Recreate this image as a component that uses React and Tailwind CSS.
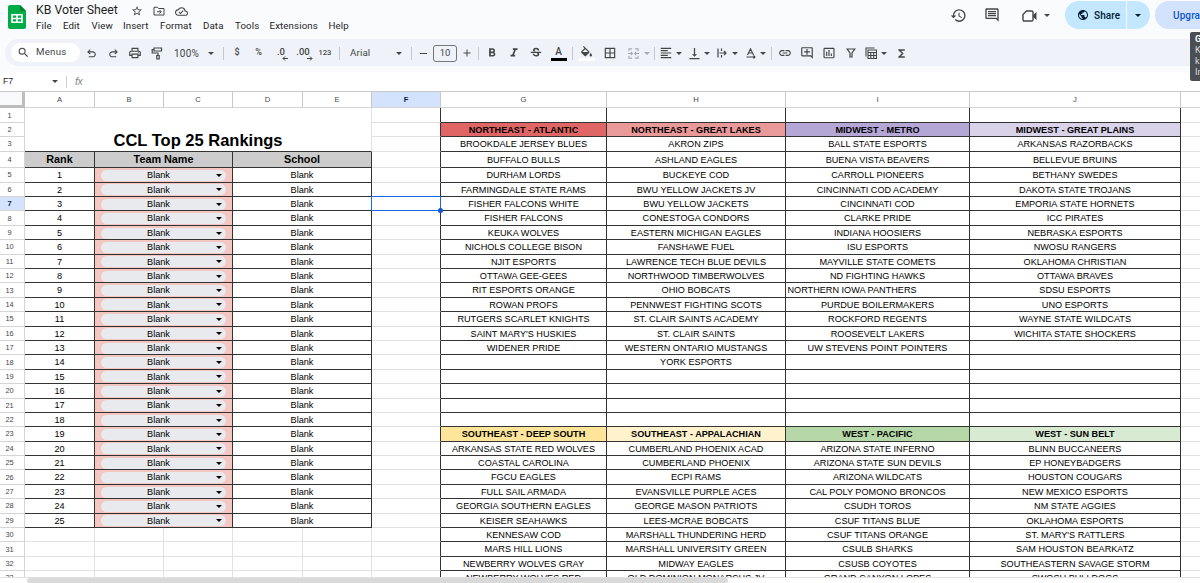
import React from "react";
import {
    MdBorderAll,
    MdFormatAlignLeft,
    MdFormatBold,
    MdFormatItalic,
    MdFunctions,
    MdHistory,
    MdInsertChartOutlined,
    MdLink,
    MdOutlineAddComment,
    MdOutlineCloudDone,
    MdOutlineComment,
    MdOutlinePrint,
    MdPublic,
    MdSearch,
    MdStarBorder,
    MdStrikethroughS,
    MdVerticalAlignBottom,
} from "react-icons/md";

const menus = [
    { label: "File", w: "w-[27px]" },
    { label: "Edit", w: "w-[28.5px]" },
    { label: "View", w: "w-[31.5px]" },
    { label: "Insert", w: "w-[37px]" },
    { label: "Format", w: "w-[43px]" },
    { label: "Data", w: "w-[32px]" },
    { label: "Tools", w: "w-[34.5px]" },
    { label: "Extensions", w: "w-[59px]" },
    { label: "Help", w: "w-[24px]" },
];

const columns = [
    { name: "A", w: "w-[70px]" },
    { name: "B", w: "w-[69px]" },
    { name: "C", w: "w-[69px]" },
    { name: "D", w: "w-[70px]" },
    { name: "E", w: "w-[69px]" },
    { name: "F", w: "w-[69px]" },
    { name: "G", w: "w-[166px]" },
    { name: "H", w: "w-[179px]" },
    { name: "I", w: "w-[184px]" },
    { name: "J", w: "w-[211px]" },
    { name: "", w: "w-[20px]" },
];

const rows = Array.from({ length: 33 }, (_, i) => i + 1);
const ranks = Array.from({ length: 25 }, (_, i) => i + 1);

// The first rows are not all the same height
const rowHeight = (n) => {
    if (n === 1) return "h-[14.6px]";
    if (n === 2) return "h-[14.2px]";
    if (n === 3) return "h-[14.8px]";
    if (n === 4) return "h-[16.4px]";
    return "h-[14.4px]";
};

const conferences = [
    {
        w: "w-[166px]",
        top: { name: "NORTHEAST - ATLANTIC", bg: "bg-[#e06666]" },
        topTeams: [
            "BROOKDALE JERSEY BLUES", "BUFFALO BULLS", "DURHAM LORDS", "FARMINGDALE STATE RAMS",
            "FISHER FALCONS WHITE", "FISHER FALCONS", "KEUKA WOLVES", "NICHOLS COLLEGE BISON",
            "NJIT ESPORTS", "OTTAWA GEE-GEES", "RIT ESPORTS ORANGE", "ROWAN PROFS",
            "RUTGERS SCARLET KNIGHTS", "SAINT MARY'S HUSKIES", "WIDENER PRIDE",
        ],
        bottom: { name: "SOUTHEAST - DEEP SOUTH", bg: "bg-[#ffe599]" },
        bottomTeams: [
            "ARKANSAS STATE RED WOLVES", "COASTAL CAROLINA", "FGCU EAGLES", "FULL SAIL ARMADA",
            "GEORGIA SOUTHERN EAGLES", "KEISER SEAHAWKS", "KENNESAW COD", "MARS HILL LIONS",
            "NEWBERRY WOLVES GRAY", "NEWBERRY WOLVES RED",
        ],
    },
    {
        w: "w-[179px]",
        top: { name: "NORTHEAST - GREAT LAKES", bg: "bg-[#ea9999]" },
        topTeams: [
            "AKRON ZIPS", "ASHLAND EAGLES", "BUCKEYE COD", "BWU YELLOW JACKETS JV",
            "BWU YELLOW JACKETS", "CONESTOGA CONDORS", "EASTERN MICHIGAN EAGLES", "FANSHAWE FUEL",
            "LAWRENCE TECH BLUE DEVILS", "NORTHWOOD TIMBERWOLVES", "OHIO BOBCATS", "PENNWEST FIGHTING SCOTS",
            "ST. CLAIR SAINTS ACADEMY", "ST. CLAIR SAINTS", "WESTERN ONTARIO MUSTANGS", "YORK ESPORTS",
        ],
        bottom: { name: "SOUTHEAST - APPALACHIAN", bg: "bg-[#fff2cc]" },
        bottomTeams: [
            "CUMBERLAND PHOENIX ACAD", "CUMBERLAND PHOENIX", "ECPI RAMS", "EVANSVILLE PURPLE ACES",
            "GEORGE MASON PATRIOTS", "LEES-MCRAE BOBCATS", "MARSHALL THUNDERING HERD", "MARSHALL UNIVERSITY GREEN",
            "MIDWAY EAGLES", "OLD DOMINION MONARCHS JV",
        ],
    },
    {
        w: "w-[184px]",
        top: { name: "MIDWEST - METRO", bg: "bg-[#b4a7d6]" },
        topTeams: [
            "BALL STATE ESPORTS", "BUENA VISTA BEAVERS", "CARROLL PIONEERS", "CINCINNATI COD ACADEMY",
            "CINCINNATI COD", "CLARKE PRIDE", "INDIANA HOOSIERS", "ISU ESPORTS",
            "MAYVILLE STATE COMETS", "ND FIGHTING HAWKS", "NORTHERN IOWA PANTHERS", "PURDUE BOILERMAKERS",
            "ROCKFORD REGENTS", "ROOSEVELT LAKERS", "UW STEVENS POINT POINTERS",
        ],
        bottom: { name: "WEST - PACIFIC", bg: "bg-[#b6d7a8]" },
        bottomTeams: [
            "ARIZONA STATE INFERNO", "ARIZONA STATE SUN DEVILS", "ARIZONA WILDCATS", "CAL POLY POMONO BRONCOS",
            "CSUDH TOROS", "CSUF TITANS BLUE", "CSUF TITANS ORANGE", "CSULB SHARKS",
            "CSUSB COYOTES", "GRAND CANYON LOPES",
        ],
    },
    {
        w: "w-[211px]",
        top: { name: "MIDWEST - GREAT PLAINS", bg: "bg-[#d9d2e9]" },
        topTeams: [
            "ARKANSAS RAZORBACKS", "BELLEVUE BRUINS", "BETHANY SWEDES", "DAKOTA STATE TROJANS",
            "EMPORIA STATE HORNETS", "ICC PIRATES", "NEBRASKA ESPORTS", "NWOSU RANGERS",
            "OKLAHOMA CHRISTIAN", "OTTAWA BRAVES", "SDSU ESPORTS", "UNO ESPORTS",
            "WAYNE STATE WILDCATS", "WICHITA STATE SHOCKERS",
        ],
        bottom: { name: "WEST - SUN BELT", bg: "bg-[#d9ead3]" },
        bottomTeams: [
            "BLINN BUCCANEERS", "EP HONEYBADGERS", "HOUSTON COUGARS", "NEW MEXICO ESPORTS",
            "NM STATE AGGIES", "OKLAHOMA ESPORTS", "ST. MARY'S RATTLERS", "SAM HOUSTON BEARKATZ",
            "SOUTHEASTERN SAVAGE STORM", "SWOSU BULLDOGS",
        ],
    },
];

const Caret = ({ className = "" }) => (
    <svg viewBox="0 0 6 3" className={`w-[6px] h-[3px] shrink-0 fill-current ${className}`}>
        <path d="M0 0h6L3 3z" />
    </svg>
);

const Slot = ({ className = "", w = "w-4", children }) => (
    <div className={`flex shrink-0 items-center justify-center ${w} ${className}`}>{children}</div>
);

const Sep = () => <div className="w-px h-[13px] bg-[#c7c7c7]" />;

const Arrow = ({ flip }) => (
    <svg viewBox="0 0 24 24" className={`mt-px size-[13px] fill-current ${flip ? "-scale-x-100" : ""}`}>
        <path d="M7 19v-2h7.1q1.575 0 2.738-1T18 13.5q0-1.5-1.162-2.5T14.1 10H7.8l2.6 2.6L9 14 4 9l5-5 1.4 1.4L7.8 8h6.3q2.425 0 4.163 1.575T20 13.5q0 2.35-1.737 3.925T14.1 19H7Z" />
    </svg>
);

const Decimal = ({ text, right }) => (
    <div className="relative flex h-[13px] items-start text-[9.5px] leading-[9px] font-medium">
        {text}
        <svg
            viewBox="0 0 6 5"
            className={`absolute -right-[3px] -bottom-px h-[5px] w-[6px] fill-none stroke-current ${right ? "-scale-x-100" : ""}`}
        >
            <path d="M6 2.5H1M3 .5l-2 2 2 2" />
        </svg>
    </div>
);

const SheetsLogo = () => (
    <svg viewBox="0 0 18 24" className="w-[18px] h-6">
        <path fill="#00ac47" d="M2 0h10l6 6v16a2 2 0 0 1-2 2H2a2 2 0 0 1-2-2V2a2 2 0 0 1 2-2z" />
        <path fill="#00832d" d="M12 0l6 6h-6z" />
        <path fill="#fff" fillRule="evenodd" d="M3.2 9h11.6v9H3.2zM5 10.6v2.1h3.2v-2.1zm4.8 0v2.1H13v-2.1zM5 14.3v2.1h3.2v-2.1zm4.8 0v2.1H13v-2.1z" />
    </svg>
);

const Header = () => (
    <div className="flex h-[39px] shrink-0 text-[#1f1f1f]">
        <div className="w-9 shrink-0 pl-2 pt-[5px]">
            <SheetsLogo />
        </div>
        <div className="w-[900px] shrink-0">
            <div className="flex h-[21px] items-center text-[#444746]">
                <span className="w-[95px] whitespace-nowrap text-[12.3px] text-[#1f1f1f]">KB Voter Sheet</span>
                <MdStarBorder className="mt-px size-3" />
                <svg viewBox="0 0 24 24" className="ml-[10px] mt-px size-3 fill-none stroke-current stroke-2">
                    <path d="M2 4.5h7l2 2.5h11v13H2zM8 13.5h8M13 10l3.5 3.5L13 17" />
                </svg>
                <MdOutlineCloudDone className="ml-[10px] mt-px size-[13px]" />
            </div>
            <div className="flex h-[11px] items-center text-[9.7px] tracking-[0.12px]">
                {menus.map((m) => (
                    <span key={m.label} className={`whitespace-nowrap ${m.w}`}>{m.label}</span>
                ))}
            </div>
        </div>
        <div className="flex h-[30px] shrink-0 items-center text-[#444746]">
            <Slot w="w-[17px]" className="ml-[13.5px]"><MdHistory className="size-[17px]" /></Slot>
            <Slot className="ml-[17.5px]"><MdOutlineComment className="size-4" /></Slot>
            <Slot className="ml-[22px]">
                <svg viewBox="0 0 16 12" className="mt-px h-3 w-4 fill-none stroke-current stroke-[1.4]">
                    <path d="M4.500 1h5.200q1.300 0 1.300 1.300v7.400Q11 11 9.700 11H2.300Q1 11 1 9.700V4.500z" />
                    <path className="fill-current stroke-none" d="M11 5l3.500-3v8L11 7z" />
                </svg>
            </Slot>
            <Slot w="w-[9px]" className="ml-[4px]"><Caret /></Slot>
            <div className="ml-[14px] flex h-7 w-[85px] items-center overflow-hidden rounded-full bg-[#c2e7ff] text-[#001d35]">
                <MdPublic className="ml-3 size-3" />
                <span className="ml-[5px] w-[32px] text-[10px] font-medium tracking-[0.1px]">Share</span>
                <div className="h-full w-px bg-[#f9fbfd]" />
                <Caret className="ml-[8px]" />
            </div>
            <div className="ml-[5px] flex h-7 w-[90px] items-center rounded-full bg-[#d3e3fd] pl-[18px] text-[10px] font-medium tracking-[0.1px] text-[#0b57d0]">
                Upgrade
            </div>
        </div>
    </div>
);

const Toolbar = () => (
    <div className="ml-[5px] flex h-[27px] w-[1230px] shrink-0 items-center rounded-full bg-[#eff3f9] pt-px pl-[6px] text-[#444746]">
        <div className="mb-px flex h-[19px] w-[69px] shrink-0 items-center rounded-full bg-white pl-[6px] text-[9.7px] tracking-[0.25px]">
            <MdSearch className="mr-[6px] size-[13px]" />
            Menus
        </div>
        <Slot w="w-[22px]"><Arrow /></Slot>
        <Slot w="w-[22px]"><Arrow flip /></Slot>
        <Slot w="w-[22px]"><MdOutlinePrint className="size-[14px]" /></Slot>
        <Slot w="w-[22px]">
            <svg viewBox="0 0 12 13" className="h-[13px] w-3 fill-none stroke-current stroke-[1.2]">
                <path d="M3 1h7.500v3H3zM3 2.500H1.200V6H7v2.500M5.800 8.500h2.400V12H5.800z" />
            </svg>
        </Slot>
        <Slot w="w-[37px]" className="text-[10px] tracking-[0.2px]">100%</Slot>
        <Slot w="w-3"><Caret /></Slot>
        <Slot w="w-[13px]"><Sep /></Slot>
        <Slot w="w-[14px]" className="text-[9px] font-medium">$</Slot>
        <Slot w="w-[29px]" className="text-[9px] font-medium">%</Slot>
        <Slot><Decimal text=".0" /></Slot>
        <Slot w="w-7"><Decimal text=".00" right /></Slot>
        <Slot className="text-[7.5px] font-medium">123</Slot>
        <Slot w="w-3"><Sep /></Slot>
        <div className="w-[47px] shrink-0 pl-[5px] text-[9.8px] tracking-[0.1px]">Arial</div>
        <Slot w="w-[13px]"><Caret /></Slot>
        <Slot w="w-[13px]"><Sep /></Slot>
        <Slot w="w-[10px]"><div className="h-px w-[7px] bg-current" /></Slot>
        <Slot w="w-[34px]">
            <div className="flex h-[17px] w-6 items-center justify-center rounded-[3px] border border-[#747775] text-[9.5px]">10</div>
        </Slot>
        <Slot w="w-[10px]">
            <svg viewBox="0 0 8 8" className="size-2 stroke-current"><path d="M4 .5v7M.5 4h7" /></svg>
        </Slot>
        <Slot w="w-[13px]"><Sep /></Slot>
        <Slot w="w-[14px]"><MdFormatBold className="size-[14px]" /></Slot>
        <Slot w="w-[22px]" className="ml-1"><MdFormatItalic className="size-[14px]" /></Slot>
        <Slot w="w-[22px]"><MdStrikethroughS className="size-[14px]" /></Slot>
        <Slot w="w-[23px]">
            <div className="flex h-[15px] w-4 flex-col items-center border-b-[3px] border-black text-[10px] leading-[12px] font-medium">A</div>
        </Slot>
        <Slot w="w-[5px]"><Sep /></Slot>
        <Slot w="w-[23px]">
            <div className="flex h-[15px] w-4 flex-col items-center border-b-[3px] border-white">
                <svg viewBox="0 0 24 18" className="h-[11px] w-[15px] shrink-0 fill-current">
                    <path d="M16.560 8.940L7.620 0 6.210 1.410l2.380 2.380-5.150 5.150a1.490 1.490 0 0 0 0 2.120l5.500 5.500c.29.29.68.44 1.060.44s.77-.15 1.060-.44l5.500-5.500c.59-.58.59-1.530 0-2.120zM5.210 10L10 5.210 14.790 10zM19 11.500s-2 2.170-2 3.500c0 1.100.9 2 2 2s2-.9 2-2c0-1.330-2-3.500-2-3.500z" />
                </svg>
            </div>
        </Slot>
        <Slot w="w-6"><MdBorderAll className="size-[14px]" /></Slot>
        <Slot w="w-[22px]" className="text-[#a8abae]">
            <svg viewBox="0 0 12 12" className="size-[11px] fill-none stroke-current stroke-[1.2]">
                <path d="M4.500 1H1v2.500M7.500 1H11v2.500M4.500 11H1V8.500M7.500 11H11V8.500M0 6h4.500M3 4.200L4.800 6 3 7.800M12 6H7.500M9 4.200L7.200 6 9 7.800" />
            </svg>
        </Slot>
        <Slot w="w-[6px]" className="text-[#a8abae]"><Caret /></Slot>
        <Slot w="w-2"><Sep /></Slot>
        <Slot><MdFormatAlignLeft className="size-[14px]" /></Slot>
        <Slot w="w-2" className="ml-[0.5px]"><Caret /></Slot>
        <Slot className="ml-[3.5px]"><MdVerticalAlignBottom className="size-[15px]" /></Slot>
        <Slot w="w-2" className="ml-[0.5px]"><Caret /></Slot>
        <Slot className="ml-[3.5px]">
            <svg viewBox="0 0 10 10" className="size-[10px] fill-none stroke-current stroke-[1.2]">
                <path d="M1 .5v9M4.500 .5v2.500M4.500 7v2.500M2.500 5h6.500M7 3l2 2-2 2" />
            </svg>
        </Slot>
        <Slot w="w-2" className="ml-px"><Caret /></Slot>
        <Slot className="ml-[3.5px]">
            <svg viewBox="0 0 10 11" className="h-[11px] w-[10px] fill-none stroke-current stroke-[1.1]">
                <path d="M1.500 7L4.500 .8 7.500 7M2.500 5h4M.5 9h8.500M7.500 7.500L9 9 7.500 10.500" />
            </svg>
        </Slot>
        <Slot w="w-2" className="ml-[0.5px]"><Caret /></Slot>
        <Slot w="w-px" className="ml-1"><Sep /></Slot>
        <Slot className="ml-[5px]"><MdLink className="size-[14px]" /></Slot>
        <Slot className="ml-[6px]"><MdOutlineAddComment className="size-[14px]" /></Slot>
        <Slot className="ml-[6px]"><MdInsertChartOutlined className="size-[14px]" /></Slot>
        <Slot className="ml-[5.5px]">
            <svg viewBox="0 0 10 10" className="size-[10px] fill-none stroke-current stroke-[1.2]">
                <path d="M1.200 1h7.600L6 5v4H4V5z" />
            </svg>
        </Slot>
        <Slot className="ml-[4.5px]">
            <svg viewBox="0 0 12 12" className="size-3 fill-none stroke-current stroke-[1.1]">
                <path d="M1 9.500V1h8.500M3 3h8.500v8.500H3zM3 5.500h8.500M3 8.500h8.500M5.800 5.500v6M8.700 5.500v6" />
            </svg>
        </Slot>
        <Slot w="w-2" className="ml-px"><Caret /></Slot>
        <Slot className="ml-[5px]"><MdFunctions className="size-[13px]" /></Slot>
    </div>
);

const FormulaBar = () => (
    <div className="mt-[6px] flex h-[19px] shrink-0 items-center bg-white text-[#444746]">
        <span className="w-[52px] pl-[3px] font-['Liberation_Sans'] text-[8.8px] text-[#1f1f1f]">F7</span>
        <Caret />
        <div className="ml-2 h-3 w-px bg-[#d0d0d0]" />
        <span className="mt-px ml-2 font-['Liberation_Sans'] text-[10.5px] tracking-[-0.3px] italic text-[#80868b]">fx</span>
    </div>
);

const ColumnHeads = () => (
    <div className="flex h-[17.3px] shrink-0 border-t border-[#c9c9c9] text-[7.6px] text-[#444746]">
        <div className="w-[25px] shrink-0 border-r-[3px] border-b-[3px] border-[#bdbdbd] bg-[#f8f9fa]" />
        {columns.map((c) => (
            <div
                key={c.name}
                className={`flex shrink-0 items-center justify-center border-r border-b border-r-[#c9c9c9] border-b-[#d5d5d5] pt-px ${c.w} ${
                    c.name === "F" ? "bg-[#d3e3fd] font-bold text-[#041e49]" : "bg-white"
                }`}
            >
                {c.name}
            </div>
        ))}
    </div>
);

const RowNumbers = () => (
    <div className="w-[25px] shrink-0 text-[7.4px] text-[#444746]">
        {rows.map((n) => (
            <div
                key={n}
                className={`flex items-center justify-center border-r border-b border-[#d5d5d5] pr-[5px] ${rowHeight(n)} ${
                    n === 7 ? "bg-[#d3e3fd] font-bold text-[#041e49]" : ""
                }`}
            >
                {n}
            </div>
        ))}
    </div>
);

const RankRow = ({ rank }) => (
    <div className="flex h-[14.4px]">
        <div className="flex w-[70px] items-center justify-center border-r border-b border-[#333] pt-[1.5px]">{rank}</div>
        <div className="flex w-[138px] items-center justify-center border-r border-b border-[#333] bg-[#f4c7c3] pt-px">
            <div className="flex h-[11px] w-[125px] items-center rounded-full bg-[#e8eaed]">
                <span className="flex-1 pt-[0.5px] text-center">Blank</span>
                <Caret className="mr-[4px] text-black" />
            </div>
        </div>
        <div className="flex w-[139px] items-center justify-center border-r border-b border-[#333] pt-[1.5px]">Blank</div>
    </div>
);

const Rankings = () => (
    <div className="w-[347px] shrink-0">
        <div className="flex h-[43.6px] items-end justify-center border-r border-b border-r-[#e1e1e1] border-b-[#333] pb-[2px] text-[16.5px] leading-[18px] font-bold">
            CCL Top 25 Rankings
        </div>
        <div className="flex h-[16.4px] bg-[#cccccc] text-[10.8px] font-bold">
            <div className="flex w-[70px] items-center justify-center border-r border-b border-[#333]">Rank</div>
            <div className="flex w-[138px] items-center justify-center border-r border-b border-[#333]">Team Name</div>
            <div className="flex w-[139px] items-center justify-center border-r border-b border-[#333]">School</div>
        </div>
        {ranks.map((r) => (
            <RankRow key={r} rank={r} />
        ))}
        {/* Empty rows under the table */}
        {[30, 31, 32, 33].map((n) => (
            <div key={n} className="flex h-[14.4px]">
                {columns.slice(0, 5).map((c) => (
                    <div key={c.name} className={`border-r border-b border-[#e1e1e1] ${c.w}`} />
                ))}
            </div>
        ))}
    </div>
);

const ColumnF = () => (
    <div className="w-[69px] shrink-0">
        {rows.map((n) => (
            <div key={n} className={`relative border-r border-b border-r-[#333] border-b-[#e1e1e1] ${rowHeight(n)}`}>
                {n === 7 && (
                    <div className="absolute -top-px -left-px -right-px -bottom-px z-10 border border-[#1a66e8]">
                        <div className="absolute -right-[3px] -bottom-[3px] size-[5px] rounded-full bg-[#0b57d0]" />
                    </div>
                )}
            </div>
        ))}
    </div>
);

const ConferenceColumn = ({ conf }) => (
    <div className={`shrink-0 ${conf.w}`}>
        {rows.map((n) => {
            const head = n === 2 ? conf.top : n === 23 ? conf.bottom : null;
            const team = n < 23 ? conf.topTeams[n - 3] : conf.bottomTeams[n - 24];
            const align = team === "NORTHERN IOWA PANTHERS" ? "justify-start pl-[1.5px]" : "justify-center";
            return (
                <div
                    key={n}
                    className={`flex items-center border-r border-b border-[#333] pt-[1.5px] whitespace-nowrap ${rowHeight(n)} ${align} ${
                        head ? `font-bold ${head.bg}` : ""
                    }`}
                >
                    {head ? head.name : team}
                </div>
            );
        })}
    </div>
);

const App = () => {
    return (
        <div className="relative flex h-[583px] w-[1200px] flex-col overflow-hidden bg-[#f9fbfd] font-['Roboto',sans-serif]">
            <Header />
            <Toolbar />
            <FormulaBar />

            {/* Sheet */}
            <div className="flex h-[485.5px] shrink-0 flex-col overflow-hidden bg-white font-['Liberation_Sans',Arial,sans-serif]">
                <ColumnHeads />
                <div className="flex text-[9.15px] leading-[11px] text-black">
                    <RowNumbers />
                    <Rankings />
                    <ColumnF />
                    {conferences.map((c) => (
                        <ConferenceColumn key={c.top.name} conf={c} />
                    ))}
                    <div className="w-[19px] shrink-0">
                        {rows.map((n) => (
                            <div key={n} className={`border-b border-[#e1e1e1] ${rowHeight(n)}`} />
                        ))}
                    </div>
                </div>
            </div>

            {/* Horizontal scrollbar */}
            <div className="flex flex-1 items-end border-t border-[#e1e1e1] bg-white pl-[27px]">
                <div className="h-[5px] w-[701px] rounded-full bg-[#d9d9d9]" />
            </div>

            {/* Account tooltip, cut off at the window edge */}
            <div className="absolute top-[32px] left-[1190px] h-[49px] w-40 rounded-[2px] bg-[#4b4f53] pt-[2px] pl-[5px] text-[9px] leading-[11px] text-[#dadce0]">
                <p className="font-bold text-white">Google Account</p>
                <p>K</p>
                <p>k</p>
                <p>In</p>
            </div>
        </div>
    );
};

export default App;
